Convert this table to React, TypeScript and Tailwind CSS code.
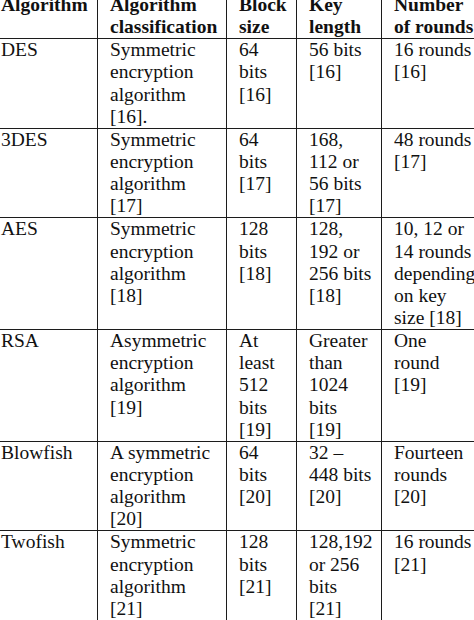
const header = [['Algorithm'], ['Algorithm', 'classification'], ['Block', 'size'], ['Key', 'length'], ['Number', 'of rounds']];

const rows: string[][][] = [
  [['DES'], ['Symmetric', 'encryption', 'algorithm', '[16].'], ['64', 'bits', '[16]'], ['56 bits', '[16]'], ['16 rounds', '[16]']],
  [['3DES'], ['Symmetric', 'encryption', 'algorithm', '[17]'], ['64', 'bits', '[17]'], ['168,', '112 or', '56 bits', '[17]'], ['48 rounds', '[17]']],
  [['AES'], ['Symmetric', 'encryption', 'algorithm', '[18]'], ['128', 'bits', '[18]'], ['128,', '192 or', '256 bits', '[18]'], ['10, 12 or', '14 rounds', 'depending', 'on key', 'size [18]']],
  [['RSA'], ['Asymmetric', 'encryption', 'algorithm', '[19]'], ['At', 'least', '512', 'bits', '[19]'], ['Greater', 'than', '1024', 'bits', '[19]'], ['One', 'round', '[19]']],
  [['Blowfish'], ['A symmetric', 'encryption', 'algorithm', '[20]'], ['64', 'bits', '[20]'], ['32 –', '448 bits', '[20]'], ['Fourteen', 'rounds', '[20]']],
  [['Twofish'], ['Symmetric', 'encryption', 'algorithm', '[21]'], ['128', 'bits', '[21]'], ['128,192', 'or 256', 'bits', '[21]'], ['16 rounds', '[21]']],
];

const widths = ['w-[109px]', 'w-[129px]', 'w-[70px]', 'w-[85px]', 'w-[110px]'];

function Cell({ lines, bold }: { lines: string[]; bold?: boolean }) {
  return (
    <td className={`border border-[#1c1c1c] pl-[12px] pr-1 py-0 align-top whitespace-nowrap overflow-hidden ${bold ? 'font-bold' : ''}`}>
      {lines.map((l, i) => (
        <div key={i}>{l}</div>
      ))}
    </td>
  );
}

export default function App() {
  return (
    <div className="w-[474px] h-[620px] overflow-hidden bg-white">
      <table
        className="w-[503px] table-fixed border-collapse -ml-[12px] -mt-[7px] text-[19.5px] leading-[22.14px] text-[#111]"
        style={{ fontFamily: '"Liberation Serif", "Times New Roman", serif' }}
      >
        <colgroup>
          {widths.map((w, i) => (
            <col key={i} className={w} />
          ))}
        </colgroup>
        <thead>
          <tr>
            {header.map((h, i) => (
              <Cell key={i} lines={h} bold />
            ))}
          </tr>
        </thead>
        <tbody>
          {rows.map((r, i) => (
            <tr key={i}>
              {r.map((c, j) => (
                <Cell key={j} lines={c} />
              ))}
            </tr>
          ))}
        </tbody>
      </table>
    </div>
  );
}
